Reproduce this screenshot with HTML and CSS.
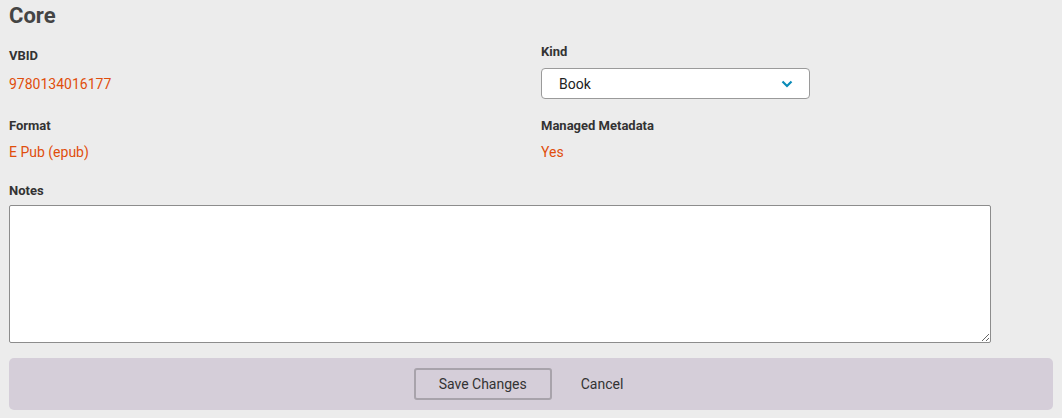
FILE: index.html
```html
<!DOCTYPE html>
<html lang="en">
<head>
  <meta charset="UTF-8" />
  <title>Core</title>
  <link rel="stylesheet" href="styles.css">
</head>
<body>
  <h2 class="title">Core</h2>

  <div class="fields">
    <div class="field field-static">
      <div class="label">VBID</div>
      <div class="value">9780134016177</div>
    </div>
    <div class="field">
      <div class="label">Kind</div>
      <div class="select">
        <span>Book</span>
        <svg width="12" height="8" viewBox="0 0 12 8">
          <path d="M1.5 1.5 L6 6 L10.5 1.5" fill="none" stroke="#0a8bb8" stroke-width="2.2" />
        </svg>
      </div>
    </div>
    <div class="field field-row2">
      <div class="label">Format</div>
      <div class="value">E Pub (epub)</div>
    </div>
    <div class="field field-row2">
      <div class="label">Managed Metadata</div>
      <div class="value">Yes</div>
    </div>
  </div>

  <div class="notes">
    <div class="label">Notes</div>
    <textarea></textarea>
  </div>

  <div class="actions">
    <button class="save">Save Changes</button>
    <button class="cancel">Cancel</button>
  </div>
</body>
</html>
```

FILE: styles.css
```css
body {
  margin: 0;
  padding: 0 9px;
  background: #ececec;
  font-family: Roboto, "Noto Sans", sans-serif;
  color: #333;
}

.title {
  margin: 0;
  padding-top: 4px;
  font-size: 22px;
  line-height: 24px;
  font-weight: bold;
  color: #444;
}

.fields {
  display: grid;
  grid-template-columns: 532px 269px;
  margin-top: 16px;
}

.label {
  font-size: 13px;
  line-height: 16px;
  font-weight: bold;
  color: #333;
}

.value {
  margin-top: 10px;
  font-size: 14px;
  line-height: 20px;
  color: #e04e0c;
}

.field-static {
  padding-top: 4px;
}

.field-row2 {
  padding-top: 19px;
}

.field-row2 .value {
  margin-top: 8px;
}

.select {
  margin-top: 8px;
  height: 31px;
  box-sizing: border-box;
  background: white;
  border: 1px solid #9a9a9a;
  border-radius: 4px;
  padding: 0 16px 0 17px;
  display: flex;
  align-items: center;
  justify-content: space-between;
  font-size: 14px;
  color: #222;
}

.notes {
  margin-top: 21px;
}

.notes textarea {
  display: block;
  margin-top: 6px;
  width: 982px;
  height: 138px;
  box-sizing: border-box;
  border: 1px solid #8c8c8c;
  border-radius: 2px;
  background: white;
}

.actions {
  margin-top: 15px;
  width: 1044px;
  height: 52px;
  box-sizing: border-box;
  background: #d5ced9;
  border-radius: 5px;
  display: flex;
  justify-content: center;
  align-items: center;
  gap: 4px;
}

button {
  font-family: Roboto, "Noto Sans", sans-serif;
  font-size: 14px;
  color: #333;
  background: transparent;
  cursor: pointer;
}

.save {
  width: 138px;
  height: 32px;
  border: 2px solid #a8a3ab;
  border-radius: 3px;
}

.cancel {
  border: none;
  padding: 0 25px;
  height: 32px;
}
```
